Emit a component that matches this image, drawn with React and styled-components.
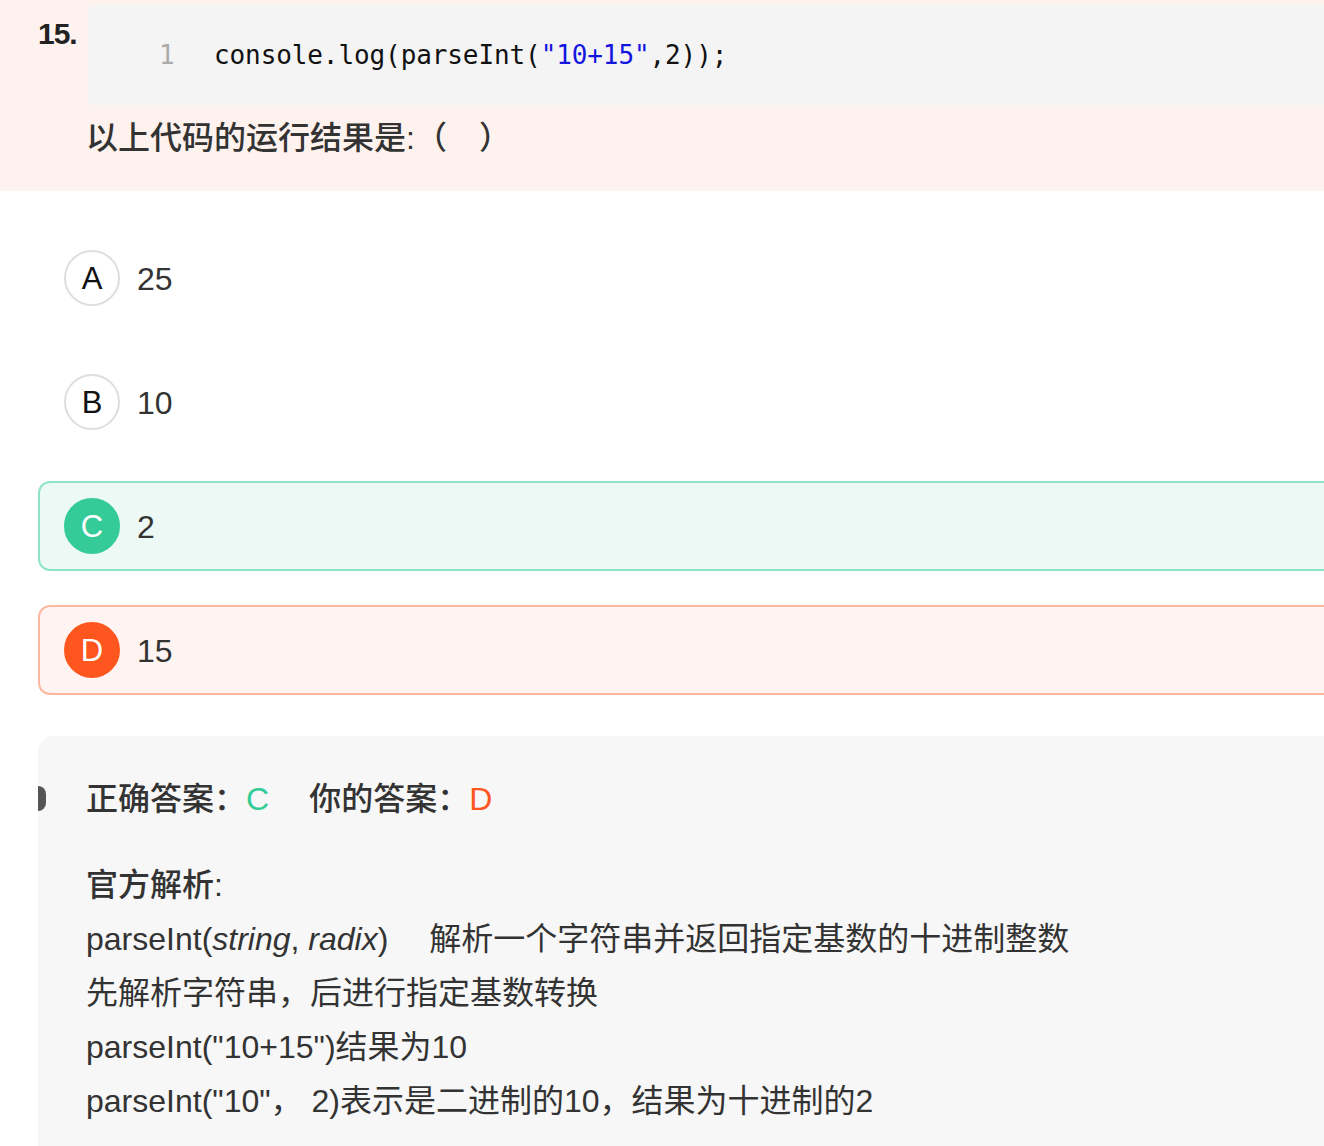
import styled, { createGlobalStyle } from 'styled-components'

const GlobalStyle = createGlobalStyle`
	html, body {
		margin: 0;
		padding: 0;
		background: #fff;
		overflow: hidden;
	}
	body {
		font-family: 'Liberation Sans', 'Noto Sans CJK SC', sans-serif;
		color: #333;
	}
`

const options = [
	{ key: 'A', text: '25', state: 'normal' },
	{ key: 'B', text: '10', state: 'normal' },
	{ key: 'C', text: '2', state: 'right' },
	{ key: 'D', text: '15', state: 'wrong' },
]

const App = () => {
	return (
		<>
			<GlobalStyle />
			<Page>
				<Header>
					<QuestionNo>15.</QuestionNo>
					<HeaderBody>
						<CodeBlock>
							<LineNo>1</LineNo>
							<CodeLine>
								console.log(parseInt(<CodeStr>"10+15"</CodeStr>,2));
							</CodeLine>
						</CodeBlock>
						<Question>以上代码的运行结果是:（　）</Question>
					</HeaderBody>
				</Header>

				<OptionList>
					{options.map((o) => (
						<OptionRow key={o.key} $state={o.state}>
							<OptionCircle $state={o.state}>{o.key}</OptionCircle>
							<OptionText>{o.text}</OptionText>
						</OptionRow>
					))}
				</OptionList>

				<Analysis>
					<Marker />
					<AnswerLine>
						正确答案：<RightMark>C</RightMark>
						<AnswerGap />
						你的答案：<WrongMark>D</WrongMark>
					</AnswerLine>
					<Explain>
						<ExplainTitle>官方解析:</ExplainTitle>
						<ExplainLine>
							parseInt(<i>string</i>, <i>radix</i>)　 解析一个字符串并返回指定基数的十进制整数
						</ExplainLine>
						<ExplainLine>先解析字符串，后进行指定基数转换</ExplainLine>
						<ExplainLine>parseInt("10+15")结果为10</ExplainLine>
						<ExplainLine>parseInt("10"， 2)表示是二进制的10，结果为十进制的2</ExplainLine>
					</Explain>
				</Analysis>
			</Page>
		</>
	)
}

export default App

const Page = styled.div`
	width: 1324px;
	height: 1146px;
	overflow: hidden;
`

const Header = styled.section`
	display: flex;
	background: #fef2ee;
	padding: 5px 0 0 38px;
	height: 186px;
`
const QuestionNo = styled.span`
	width: 50px;
	flex-shrink: 0;
	padding-top: 13px;
	font-size: 30px;
	font-weight: 700;
	line-height: 32px;
	color: #222;
	letter-spacing: -1px;
`
const HeaderBody = styled.div`
	flex: 1;
	margin-right: -20px;
`
const CodeBlock = styled.div`
	display: flex;
	align-items: center;
	height: 100px;
	background: #f4f4f4;
	border-radius: 6px 0 0 6px;
	font-family: 'DejaVu Sans Mono', 'Liberation Mono', monospace;
	font-size: 26px;
	letter-spacing: -0.1px;
`
const LineNo = styled.span`
	width: 14px;
	margin-left: 71px;
	margin-right: 41px;
	color: #aaa;
`
const CodeLine = styled.code`
	font-family: inherit;
	color: #111;
	white-space: pre;
`
const CodeStr = styled.span`
	color: #1515e0;
`
const Question = styled.p`
	margin: 17px 0 0 -2px;
	font-size: 32px;
	line-height: 32px;
	font-weight: 500;
	color: #333;
`

const OptionList = styled.ul`
	list-style: none;
	margin: 42px -20px 0 38px;
	padding: 0;
	display: flex;
	flex-direction: column;
	gap: 34px;
`
const rowColors = {
	normal: { border: 'transparent', bg: 'transparent' },
	right: { border: '#8fe3c6', bg: '#edf9f5' },
	wrong: { border: '#fdb8a1', bg: '#fff4f1' },
}
const OptionRow = styled.li`
	display: flex;
	align-items: center;
	height: 90px;
	box-sizing: border-box;
	padding-left: 24px;
	border: 2px solid ${({ $state }) => rowColors[$state].border};
	background: ${({ $state }) => rowColors[$state].bg};
	border-radius: 12px 0 0 12px;
`
const circleColors = {
	normal: { bg: '#fff', border: '#dedede', color: '#111' },
	right: { bg: '#34cb98', border: '#34cb98', color: '#fff' },
	wrong: { bg: '#ff561f', border: '#ff561f', color: '#fff' },
}
const OptionCircle = styled.span`
	display: flex;
	align-items: center;
	justify-content: center;
	width: 56px;
	height: 56px;
	box-sizing: border-box;
	border-radius: 50%;
	border: 2px solid ${({ $state }) => circleColors[$state].border};
	background: ${({ $state }) => circleColors[$state].bg};
	color: ${({ $state }) => circleColors[$state].color};
	font-size: 31px;
	padding-top: 2px;
`
const OptionText = styled.span`
	margin-left: 17px;
	font-size: 32px;
	color: #333;
	padding-top: 2px;
`

const Analysis = styled.section`
	position: relative;
	margin: 41px -20px 0 38px;
	padding: 47px 0 18px 48px;
	background: #f7f7f7;
	border-radius: 16px 0 0 0;
`
const Marker = styled.div`
	position: absolute;
	left: 0;
	top: 50px;
	width: 8px;
	height: 25px;
	background: #555;
	border-radius: 0 13px 13px 0;
`
const AnswerLine = styled.p`
	margin: 0;
	font-size: 32px;
	line-height: 32px;
	font-weight: 500;
	color: #333;
`
const RightMark = styled.span`
	color: #34cb98;
	font-weight: 400;
`
const WrongMark = styled.span`
	color: #ff561f;
	font-weight: 400;
`
const AnswerGap = styled.span`
	display: inline-block;
	width: 40px;
`
const Explain = styled.div`
	margin-top: 43px;
	font-size: 32px;
	line-height: 54px;
	color: #333;
`
const ExplainTitle = styled.p`
	margin: 0;
	font-weight: 500;
`
const ExplainLine = styled.p`
	margin: 0;
	white-space: pre;
`
